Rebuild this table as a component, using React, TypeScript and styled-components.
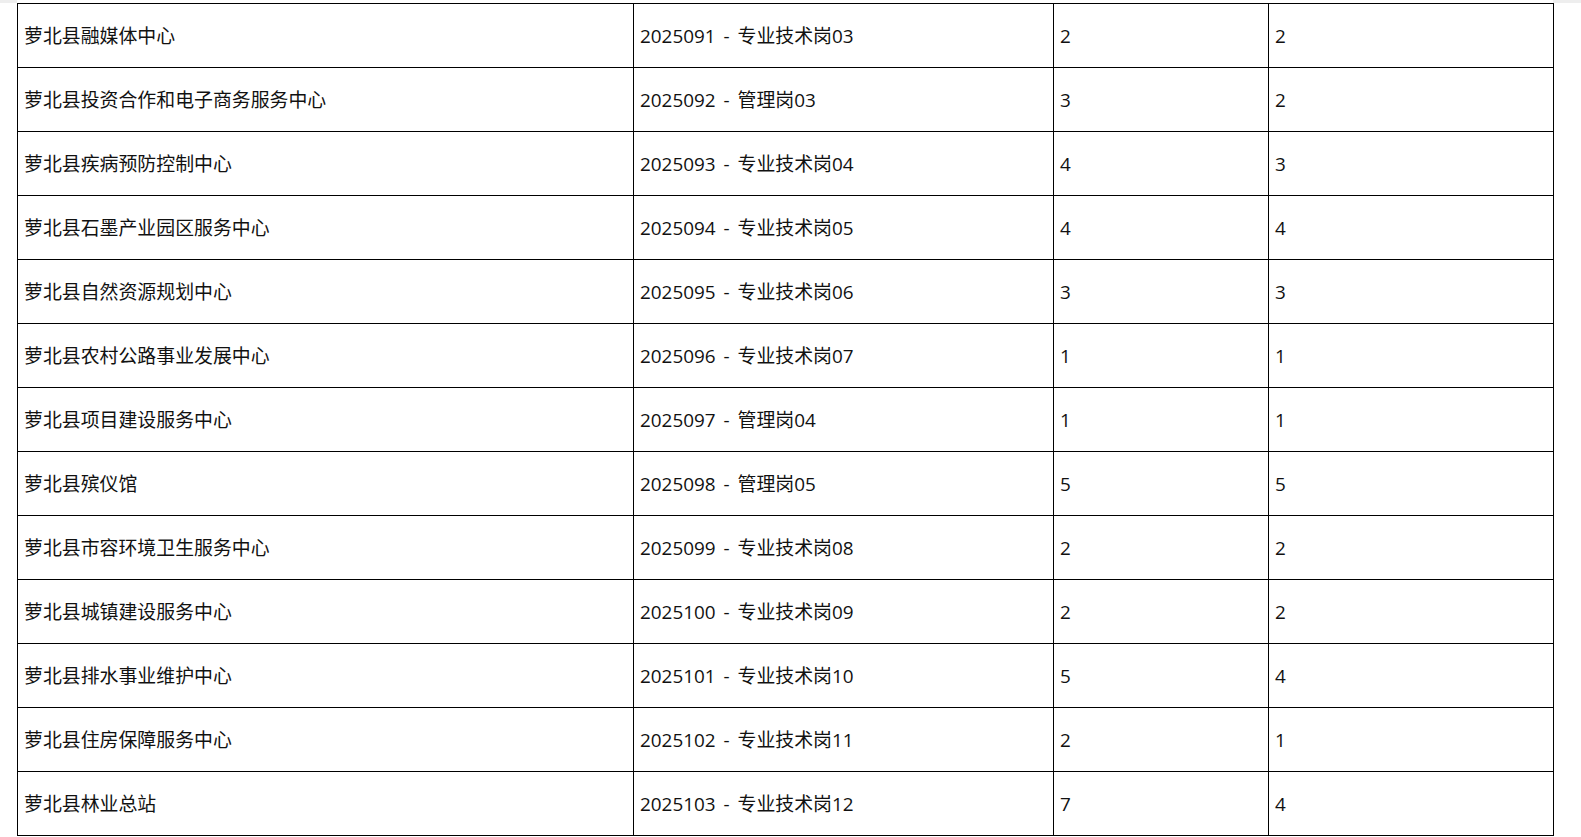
import React from "react";
import styled, { createGlobalStyle } from "styled-components";

const GlobalStyle = createGlobalStyle`
  html, body {
    margin: 0;
    padding: 0;
    background: #ffffff;
  }
  body {
    font-family: "Open Sans", "Noto Sans CJK SC", "Microsoft YaHei", sans-serif;
    color: #111;
  }
`;

const Page = styled.div`
  width: 1581px;
  height: 837px;
  overflow: hidden;
`;

const TopStrip = styled.div`
  display: grid;
  grid-template-columns: 17px 1536px 1fr;
  height: 3px;
`;

const StripPart = styled.div<{ $grey?: boolean }>`
  background: ${(p) => (p.$grey ? "#eeeeee" : "#ffffff")};
`;

const Table = styled.div`
  margin-left: 17px;
  width: 1537px;
  border-bottom: 1px solid #000;
`;

const Row = styled.div`
  display: grid;
  grid-template-columns: 616px 420px 215px 286px;
  height: 64px;
`;

const Cell = styled.div<{ $last?: boolean }>`
  box-sizing: border-box;
  display: flex;
  align-items: center;
  padding: 2px 0 0 6px;
  border-top: 1px solid #000;
  border-left: 1px solid #000;
  border-right: ${(p) => (p.$last ? "1px solid #000" : "none")};
  font-size: 18.9px;
  line-height: 1;
  word-spacing: 3px;
  white-space: nowrap;
`;

const rows: [string, string, number, number][] = [
  ["萝北县融媒体中心", "2025091 - 专业技术岗03", 2, 2],
  ["萝北县投资合作和电子商务服务中心", "2025092 - 管理岗03", 3, 2],
  ["萝北县疾病预防控制中心", "2025093 - 专业技术岗04", 4, 3],
  ["萝北县石墨产业园区服务中心", "2025094 - 专业技术岗05", 4, 4],
  ["萝北县自然资源规划中心", "2025095 - 专业技术岗06", 3, 3],
  ["萝北县农村公路事业发展中心", "2025096 - 专业技术岗07", 1, 1],
  ["萝北县项目建设服务中心", "2025097 - 管理岗04", 1, 1],
  ["萝北县殡仪馆", "2025098 - 管理岗05", 5, 5],
  ["萝北县市容环境卫生服务中心", "2025099 - 专业技术岗08", 2, 2],
  ["萝北县城镇建设服务中心", "2025100 - 专业技术岗09", 2, 2],
  ["萝北县排水事业维护中心", "2025101 - 专业技术岗10", 5, 4],
  ["萝北县住房保障服务中心", "2025102 - 专业技术岗11", 2, 1],
  ["萝北县林业总站", "2025103 - 专业技术岗12", 7, 4],
];

export default function App() {
  return (
    <Page>
      <GlobalStyle />
      <TopStrip>
        <StripPart $grey />
        <StripPart />
        <StripPart $grey />
      </TopStrip>
      <Table>
        {rows.map(([unit, post, a, b]) => (
          <Row key={post}>
            <Cell>{unit}</Cell>
            <Cell>{post}</Cell>
            <Cell>{a}</Cell>
            <Cell $last>{b}</Cell>
          </Row>
        ))}
      </Table>
    </Page>
  );
}
